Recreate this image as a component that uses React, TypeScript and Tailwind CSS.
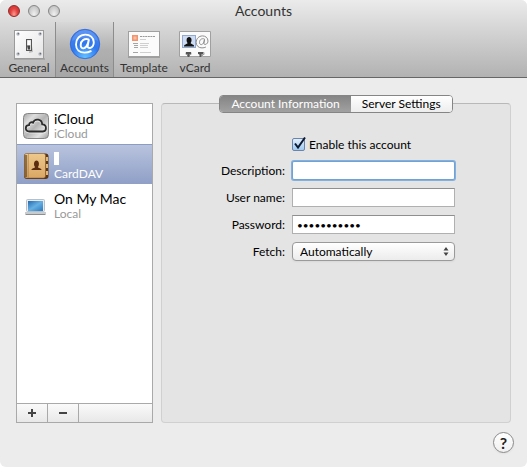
import { useState, type ReactNode } from "react";

function SwitchIcon() {
  return (
    <svg width="32" height="32" viewBox="0 0 32 32" aria-hidden="true">
      <defs>
        <linearGradient id="plate" x1="0" y1="0" x2="1" y2="1">
          <stop offset="0" stopColor="#fff" />
          <stop offset="1" stopColor="#e4e4e4" />
        </linearGradient>
      </defs>
      <path d="M1 31h31" stroke="#777" opacity="0.6" />
      <rect x="1.500" y="2.500" width="29" height="28" fill="url(#plate)" stroke="#9a9a9a" />
      {[[5, 6], [27, 6], [5, 26], [27, 26]].map(([x, y]) => (
        <g key={`${x}-${y}`}>
          <circle cx={x} cy={y} r="1.700" fill="#b4b8c0" />
          <circle cx={x + 0.4} cy={y - 0.4} r="0.800" fill="#6a6e78" />
        </g>
      ))}
      <path d="M18 12l2 12-4 1z" fill="#bbb" />
      <rect x="13.500" y="11.500" width="5" height="11" fill="#d5d5d5" stroke="#555" />
      <path d="M14 17.500h3v4h-2z" fill="#444" />
      <rect x="14.500" y="12.500" width="3" height="4.500" fill="#fff" />
    </svg>
  );
}

function AtIcon() {
  return (
    <svg width="32" height="32" viewBox="0 0 32 32" aria-hidden="true">
      <defs>
        <radialGradient id="blue" cx="0.5" cy="0.95" r="0.95">
          <stop offset="0" stopColor="#62c0ff" />
          <stop offset="0.5" stopColor="#2f78ee" />
          <stop offset="1" stopColor="#4a88f0" />
        </radialGradient>
      </defs>
      <circle cx="16" cy="16" r="14.700" fill="url(#blue)" stroke="#2f5fd6" strokeWidth="0.800" />
      <path d="M3 13a13.200 13.200 0 0 1 26 0c-7-4-19-4-26 0z" fill="#fff" opacity="0.120" />
      <path
        d="M19.600 11.400c-4.400-1.300-7.900 1.400-7.900 5.500 0 5.100 5.200 4.400 7-1l1.200-4.300-1.200 6.200c-.6 3.900 6.100 2.500 6.100-3.500 0-4.900-3.900-7.700-8.400-7.700-5.600 0-9.400 4.400-9.400 9.800 0 5.200 3.700 8.200 8.600 8.200 2.400 0 4.500-.5 6.200-1.400"
        fill="none"
        stroke="#fff"
        strokeWidth="1.900"
        strokeLinecap="round"
      />
    </svg>
  );
}

function TemplateIcon() {
  return (
    <svg width="34" height="32" viewBox="0 0 34 32" aria-hidden="true">
      <path d="M1 29.500h32" stroke="#888" opacity="0.600" />
      <rect x="1.500" y="3.500" width="31" height="25" fill="#fbfbfb" stroke="#a0a0a0" />
      <rect x="5" y="7" width="6" height="6" fill="#f0956f" />
      <rect x="6.500" y="8.500" width="3" height="3" fill="#f8bda2" />
      <path d="M13 8.500h15" stroke="#999" strokeDasharray="2 .6" />
      <path d="M13 11.500h6M13 15.500h9M13 17.500h8M13 19.500h8M13 24.500h11" stroke="#cfcfcf" />
      <path d="M6 15.500h5M7 17.500h4M7 19.500h4M6 24.500h5" stroke="#a5a5a5" />
    </svg>
  );
}

function VCardIcon() {
  return (
    <svg width="34" height="32" viewBox="0 0 34 32" aria-hidden="true">
      <path d="M1.500 3.500h31v25h-8v-2h1.500v-2h-5v2h1.500v2h-11v-2h1.500v-2h-5v2h1.500v2h-8z" fill="#fafafa" stroke="#a0a0a0" />
      <path d="M8 25h5M20 25h5" stroke="#555" strokeWidth="2" />
      <path d="M10.500 26v3M22.500 26v3" stroke="#555" strokeWidth="2" />
      <rect x="4.500" y="7.500" width="13" height="12" fill="#cddcf2" stroke="#93a9cd" />
      <path d="M6 18.500c0-2.500 3.200-2 3.600-3.500-1.700-2-1.200-6 1.500-6s3.200 4 1.500 6c.4 1.500 3.600 1 3.600 3.500z" fill="#111" />
      <path d="M26.500 11c-3-1-5 .8-5 3.400 0 3.300 3.600 2.800 4.500-.7l.5-2.300-.6 4c0 2 4.100 1.200 4.100-2.300 0-3.500-2.700-5.200-5.500-5.200-3.700 0-6.300 2.900-6.300 6.500 0 3.500 2.500 5.500 5.800 5.500 1.500 0 2.900-.3 3.900-.9" fill="none" stroke="#8d8d8d" />
    </svg>
  );
}

function CloudIcon() {
  return (
    <svg width="28" height="28" viewBox="0 0 28 28" aria-hidden="true">
      <defs>
        <linearGradient id="steel" x1="0" y1="0" x2="1" y2="1">
          <stop offset="0" stopColor="#a5a5a5" />
          <stop offset="0.25" stopColor="#dedede" />
          <stop offset="0.5" stopColor="#b4b4b4" />
          <stop offset="0.75" stopColor="#e2e2e2" />
          <stop offset="1" stopColor="#9a9a9a" />
        </linearGradient>
      </defs>
      <rect x="1.500" y="1.500" width="25" height="25" rx="4" fill="url(#steel)" stroke="#858585" />
      <path d="M7.500 20.500c-5-.4-4.700-6.200-.5-6.300.2-2.600 2.400-3.500 4-2.600 2-4.800 9-3.600 9.200 1.800 5 .2 4.800 6.800.6 7.100z" fill="none" stroke="#f4f4f4" strokeWidth="2" opacity="0.700" />
      <path d="M7.500 19.500c-5-.4-4.700-6.200-.5-6.300.2-2.600 2.400-3.500 4-2.600 2-4.800 9-3.600 9.200 1.800 5 .2 4.800 6.800.6 7.100z" fill="none" stroke="#2c2c2c" strokeWidth="1.800" />
    </svg>
  );
}

function BookIcon() {
  return (
    <svg width="28" height="28" viewBox="0 0 28 28" aria-hidden="true">
      <defs>
        <linearGradient id="leather" x1="0" y1="0" x2="0" y2="1">
          <stop offset="0" stopColor="#eec88c" />
          <stop offset="1" stopColor="#d9a765" />
        </linearGradient>
      </defs>
      <rect x="2" y="1.500" width="24.500" height="25.500" rx="3" fill="#5c3716" />
      <rect x="2.500" y="1.500" width="21" height="24.500" rx="2" fill="url(#leather)" stroke="#8d5d2b" strokeWidth="0.500" />
      <path d="M6.500 2v24" stroke="#b58245" strokeWidth="0.600" />
      <path d="M4 3.500v22" stroke="#35200c" strokeWidth="2.400" strokeDasharray="1 1" />
      <path d="M24 5h2v4h-2zM24 12h2v4h-2zM24 19h2v4h-2z" fill="#e2b678" />
      <path d="M9.500 18c0-2 3.300-1.600 3.600-3-1.800-2-1.300-6.500 1.400-6.500s3.200 4.500 1.400 6.500c.3 1.400 3.600 1 3.600 3z" fill="#5c2b10" />
    </svg>
  );
}

function LaptopIcon() {
  return (
    <svg width="28" height="28" viewBox="0 0 28 28" aria-hidden="true">
      <defs>
        <linearGradient id="screen" x1="0" y1="0" x2="1" y2="1">
          <stop offset="0" stopColor="#2469b0" />
          <stop offset="0.5" stopColor="#66b0e2" />
          <stop offset="1" stopColor="#2a78be" />
        </linearGradient>
      </defs>
      <rect x="4.500" y="7.500" width="18" height="12" rx="1" fill="#e6ecf2" stroke="#b9bfc6" />
      <rect x="6" y="9" width="15" height="10" fill="url(#screen)" />
      <path d="M3 20h21v2H3z" fill="#c9cccf" />
      <path d="M3.500 22.500h20" stroke="#8c8f92" />
    </svg>
  );
}

const tools: { name: string; width: string; icon: ReactNode }[] = [
  { name: "General", width: "w-[52px]", icon: <SwitchIcon /> },
  { name: "Accounts", width: "w-[59px]", icon: <AtIcon /> },
  { name: "Template", width: "w-[60px]", icon: <TemplateIcon /> },
  { name: "vCard", width: "w-[42px]", icon: <VCardIcon /> },
];

const accounts: { name: string; kind: string; icon: ReactNode }[] = [
  { name: "iCloud", kind: "iCloud", icon: <CloudIcon /> },
  { name: "", kind: "CardDAV", icon: <BookIcon /> },
  { name: "On My Mac", kind: "Local", icon: <LaptopIcon /> },
];

const field = "h-[19px] w-full border bg-white px-1 text-black outline-none";
const plain = "border-[#b0b0b0] border-t-[#8f8f8f]";

export default function App() {
  const [tool, setTool] = useState("Accounts");
  const [account, setAccount] = useState(1);
  const [tab, setTab] = useState("Account Information");

  return (
    <div className="min-h-screen bg-white font-['Lato',sans-serif] text-black">
      <div className="flex min-h-screen flex-col overflow-hidden rounded-md bg-[#ececec]">
        <header className="flex h-[78px] flex-col border-b border-[#666] bg-linear-to-b from-[#ebebeb] to-[#b2b2b2]">
          <div className="grid h-[22px] shrink-0 grid-cols-[1fr_auto_1fr] items-center">
            <div className="flex gap-2 pl-2">
              <button aria-label="Close" className="size-3 rounded-full border border-[#8f2a2a] bg-radial-[at_50%_85%] from-[#ff9c94] via-[#e2423f] to-[#c92e2e]" />
              <button aria-label="Minimize" className="size-3 rounded-full border border-[#858585] bg-radial-[at_50%_85%] from-[#f1f1f1] to-[#b4b4b4]" />
              <button aria-label="Zoom" className="size-3 rounded-full border border-[#858585] bg-radial-[at_50%_85%] from-[#f1f1f1] to-[#b4b4b4]" />
            </div>
            <h1 className="text-sm text-[#333]">Accounts</h1>
          </div>
          <nav className="flex flex-1 pl-[3px]">
            {tools.map((t) => (
              <button
                key={t.name}
                onClick={() => setTool(t.name)}
                aria-pressed={tool === t.name}
                className={`flex flex-col items-center pt-[6px] text-xs leading-4 text-[#333] ${t.width} ${
                  tool === t.name ? "border-x border-[#8c8c8c] bg-linear-to-b from-[#d8d8d8] via-[#b0b0b0] to-[#a6a6a6]" : ""
                }`}
              >
                {t.icon}
                {t.name}
              </button>
            ))}
          </nav>
        </header>

        <main className="flex flex-1 gap-2 px-4 pt-[25px]">
          <section aria-label="Accounts" className="flex w-[137px] shrink-0 flex-col border border-[#a9a9a9] bg-white">
            <ul className="flex-1">
              {accounts.map((a, i) => (
                <li key={a.kind}>
                  <button
                    onClick={() => setAccount(i)}
                    className={`flex h-10 w-full items-center gap-1 border-t pt-[2px] pl-[5px] text-left ${
                      account === i ? "border-[#8c9cc2] bg-linear-to-b from-[#b8c3de] to-[#8f9fc6] text-white" : "border-transparent"
                    }`}
                  >
                    {a.icon}
                    <span className="flex flex-col">
                      <span className="flex h-4 items-center text-sm leading-4">
                        {a.name || <span className="h-[13px] w-[5px] bg-white" />}
                      </span>
                      <span className={`text-xs leading-[14px] ${account === i ? "text-white" : "text-[#999]"}`}>{a.kind}</span>
                    </span>
                  </button>
                </li>
              ))}
            </ul>
            <div className="flex h-[19px] border-t border-[#a9a9a9] bg-linear-to-b from-[#fafafa] to-[#e8e8e8]">
              <button aria-label="Add account" className="flex w-[31px] items-center justify-center border-r border-[#a9a9a9]">
                <svg width="8" height="8" viewBox="0 0 8 8"><path d="M0 4h8M4 0v8" stroke="#444" strokeWidth="2" /></svg>
              </button>
              <button aria-label="Remove account" className="flex w-[31px] items-center justify-center border-r border-[#a9a9a9]">
                <svg width="8" height="8" viewBox="0 0 8 8"><path d="M0 4h8" stroke="#444" strokeWidth="2" /></svg>
              </button>
            </div>
          </section>

          <section className="flex min-w-0 flex-1 flex-col items-center rounded border border-[#d0d0d0] border-t-[#b8b8b8] bg-[#e4e4e4]">
            <div role="tablist" className="-mt-[9px] flex h-[18px] overflow-hidden rounded border border-[#858585] bg-white text-xs">
              {["Account Information", "Server Settings"].map((name) => (
                <button
                  key={name}
                  role="tab"
                  aria-selected={tab === name}
                  onClick={() => setTab(name)}
                  className={`flex items-center px-[11px] ${
                    tab === name ? "bg-linear-to-b from-[#858585] to-[#a1a1a1] text-white" : "bg-linear-to-b from-white to-[#ededed]"
                  }`}
                >
                  {name}
                </button>
              ))}
            </div>

            <form className="mt-[23px] grid grid-cols-[68px_163px] items-center gap-x-[7px] gap-y-2 text-xs" onSubmit={(e) => e.preventDefault()}>
              <label className="col-start-2 flex h-[17px] items-center gap-1">
                <span className="relative size-[13px]">
                  <input type="checkbox" defaultChecked className="peer block size-[13px] appearance-none rounded-xs border border-[#6b84ab] bg-linear-to-b from-[#e2effb] to-[#9fcaf0]" />
                  <svg className="pointer-events-none absolute -top-[2px] left-0 hidden peer-checked:block" width="15" height="15" viewBox="0 0 15 15">
                    <path d="M3 7.500l3 4L13 1.500" fill="none" stroke="#0c1b33" strokeWidth="2" />
                  </svg>
                </span>
                Enable this account
              </label>

              <label htmlFor="description" className="text-right">Description:</label>
              <input id="description" className={`${field} rounded-xs border-[#6fa3d8] ring-1 ring-[#86b0dc]`} />

              <label htmlFor="username" className="text-right">User name:</label>
              <input id="username" className={`${field} ${plain}`} />

              <label htmlFor="password" className="text-right">Password:</label>
              <input id="password" type="password" defaultValue="addressbook" className={`${field} ${plain} text-[10px]`} />

              <label htmlFor="fetch" className="text-right">Fetch:</label>
              <div className="relative">
                <select id="fetch" className="block h-[19px] w-full appearance-none rounded border border-[#9a9a9a] bg-linear-to-b from-white to-[#ececec] px-[7px] text-xs leading-4 shadow-xs">
                  <option>Automatically</option>
                  <option>Manually</option>
                </select>
                <svg className="pointer-events-none absolute top-[5px] right-[6px]" width="6" height="9" viewBox="0 0 6 9">
                  <path d="M3 0l2.500 3.500h-5zM3 9l2.500-3.500h-5z" fill="#444" />
                </svg>
              </div>
            </form>
          </section>
        </main>

        <footer className="flex h-11 items-start justify-end px-[13px] pt-[9px]">
          <button aria-label="Help" className="flex size-[21px] items-center justify-center rounded-full border border-[#8a8a8a] bg-linear-to-b from-white to-[#f0f0f0] text-base font-bold text-[#222] shadow-xs">
            ?
          </button>
        </footer>
      </div>
    </div>
  );
}
